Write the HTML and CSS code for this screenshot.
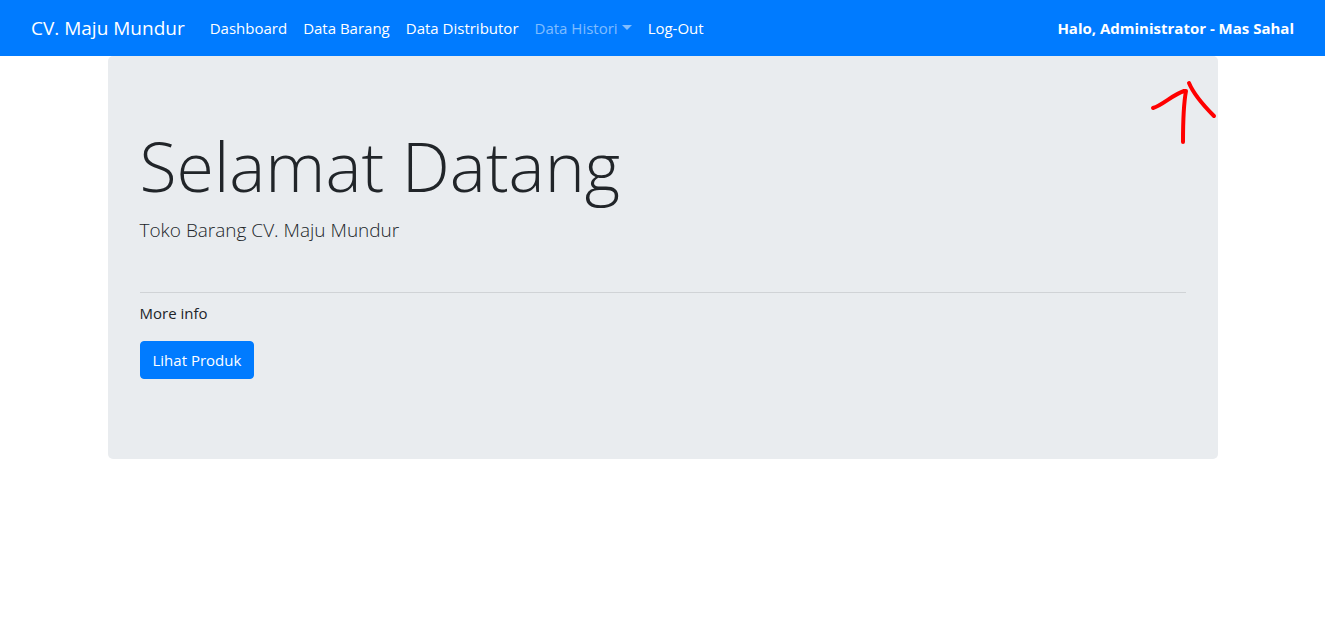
FILE: index.html
```html
<!DOCTYPE html>
<html lang="id">
<head>
  <meta charset="utf-8">
  <meta name="viewport" content="width=device-width, initial-scale=1">
  <title>CV. Maju Mundur</title>
  <link rel="stylesheet" href="styles.css">
</head>
<body>
  <nav class="navbar">
    <a class="navbar-brand" href="#">CV. Maju Mundur</a>
    <ul class="navbar-nav">
      <li><a class="nav-link" href="#">Dashboard</a></li>
      <li><a class="nav-link" href="#">Data Barang</a></li>
      <li><a class="nav-link" href="#">Data Distributor</a></li>
      <li><a class="nav-link nav-link-muted dropdown-toggle" href="#" aria-haspopup="true">Data Histori</a></li>
      <li><a class="nav-link" href="#">Log-Out</a></li>
    </ul>
    <strong class="navbar-user">Halo, Administrator - Mas Sahal</strong>
  </nav>
  <main class="container">
    <section class="jumbotron">
      <h1 class="display">Selamat Datang</h1>
      <p class="lead">Toko Barang CV. Maju Mundur</p>
      <hr class="divider">
      <p class="info">More info</p>
      <a class="btn" href="#">Lihat Produk</a>
      <svg class="arrow" viewBox="0 0 70 70" width="70" height="70" aria-hidden="true">
        <path d="M5 33C15 30 24 20 36 16L38 16C35 32 35 48 35 67M41 8C46 20 56 31 66 41"/>
      </svg>
    </section>
  </main>
</body>
</html>
```

FILE: styles.css
```css
*,
*::before,
*::after {
  box-sizing: border-box;
}

body {
  margin: 0;
  background: #fff;
  color: #212529;
  font-family: "Segoe UI", "Open Sans", "Noto Sans", sans-serif;
  font-size: 15px;
  line-height: 24px;
}

a {
  text-decoration: none;
}

.navbar {
  display: flex;
  align-items: center;
  min-height: 56px;
  padding: 8px 31px;
  background: #007bff;
  color: #fff;
}

.navbar-brand {
  margin-right: 17px;
  color: #fff;
  font-size: 19px;
  line-height: 30px;
  white-space: nowrap;
}

.navbar-nav {
  display: flex;
  margin: 0;
  padding: 0;
  list-style: none;
}

.nav-link {
  display: block;
  padding: 8px;
  color: #fff;
  white-space: nowrap;
}

.nav-link-muted {
  color: rgba(255, 255, 255, 0.5);
}

.dropdown-toggle::after {
  content: "";
  display: inline-block;
  margin-left: 4px;
  vertical-align: 4px;
  border-top: 5px solid;
  border-right: 5px solid transparent;
  border-left: 5px solid transparent;
}

.navbar-user {
  margin-left: auto;
  font-weight: 700;
  white-space: nowrap;
}

.container {
  max-width: 1140px;
  margin: 0 auto;
  padding: 0 15px;
}

.jumbotron {
  position: relative;
  padding: 64px 32px 80px;
  border-radius: 5px;
  background: #e9ecef;
}

.display {
  margin: 0 0 4px;
  font-size: 68px;
  font-weight: 300;
  line-height: 91px;
}

.lead {
  margin: 0;
  font-size: 19px;
  font-weight: 300;
  line-height: 30px;
}

.divider {
  margin: 47px 0 8px;
  border: 0;
  border-top: 1px solid #d0d3d6;
}

.info {
  margin: 0 0 16px;
}

.btn {
  display: inline-block;
  padding: 6px 12px;
  border: 1px solid #007bff;
  border-radius: 4px;
  background: #007bff;
  color: #fff;
  vertical-align: top;
}

.arrow {
  position: absolute;
  top: 19px;
  right: 0;
  fill: none;
  stroke: #f00;
  stroke-width: 4;
  stroke-linecap: round;
  stroke-linejoin: round;
}
```
